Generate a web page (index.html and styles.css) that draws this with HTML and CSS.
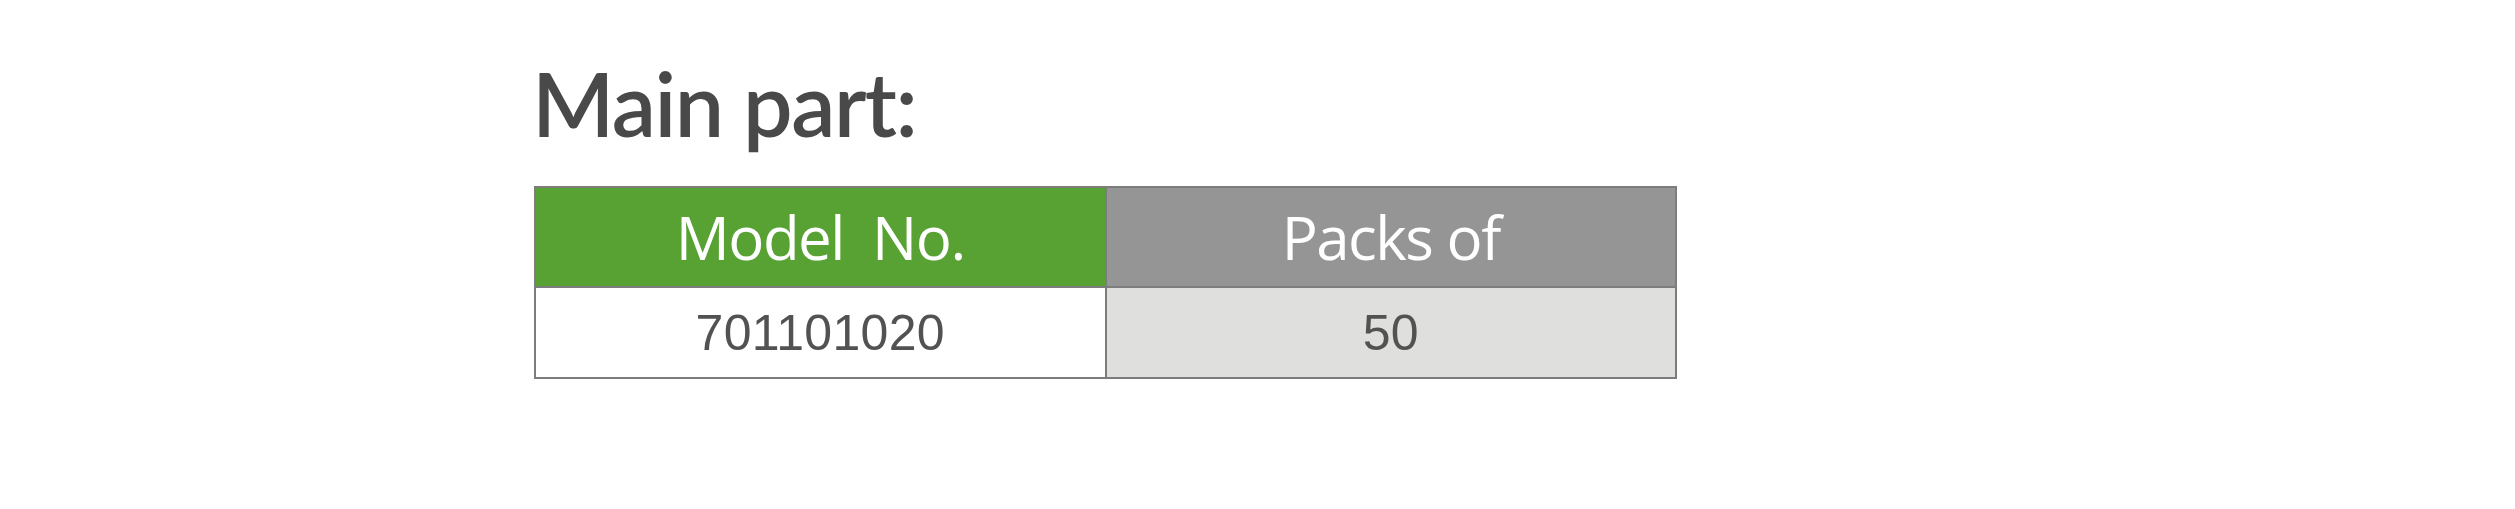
FILE: index.html
```html
<!DOCTYPE html>
<html lang="en">
<head>
<meta charset="utf-8">
<title>Main part</title>
<link rel="stylesheet" href="styles.css">
</head>
<body>
<main class="page">
  <h1 class="title">Main part:</h1>
  <table class="spec">
    <thead>
      <tr>
        <th class="head head-green">Model&nbsp; No.</th>
        <th class="head head-gray">Packs of</th>
      </tr>
    </thead>
    <tbody>
      <tr>
        <td class="cell cell-white">701101020</td>
        <td class="cell cell-gray">50</td>
      </tr>
    </tbody>
  </table>
</main>
</body>
</html>
```

FILE: styles.css
```css
html, body {
  margin: 0;
  padding: 0;
  background: #ffffff;
}

.page {
  padding: 59px 0 0 534px;
}

.title {
  margin: 0 0 39px -2px;
  font-family: "Lato", "Open Sans", sans-serif;
  font-weight: 600;
  font-size: 88px;
  line-height: 88px;
  letter-spacing: -1.5px;
  color: #4a494a;
}

.spec {
  border-collapse: collapse;
  width: 1143px;
  table-layout: fixed;
}

.head,
.cell {
  border: 2px solid #7d7d7d;
  padding: 0;
  text-align: center;
}

.head {
  height: 98px;
  font-family: "Open Sans", "Noto Sans", sans-serif;
  font-weight: 400;
  font-size: 60px;
  letter-spacing: -1.5px;
  color: #ffffff;
}

.head-green { background: #58a234; }
.head-gray { background: #959595; }

.cell {
  height: 89px;
  font-family: "Liberation Sans", Arial, sans-serif;
  font-size: 50px;
  letter-spacing: 0.3px;
  color: #525252;
}

.cell-white { background: #ffffff; }
.cell-gray { background: #dfdfdd; }
```
